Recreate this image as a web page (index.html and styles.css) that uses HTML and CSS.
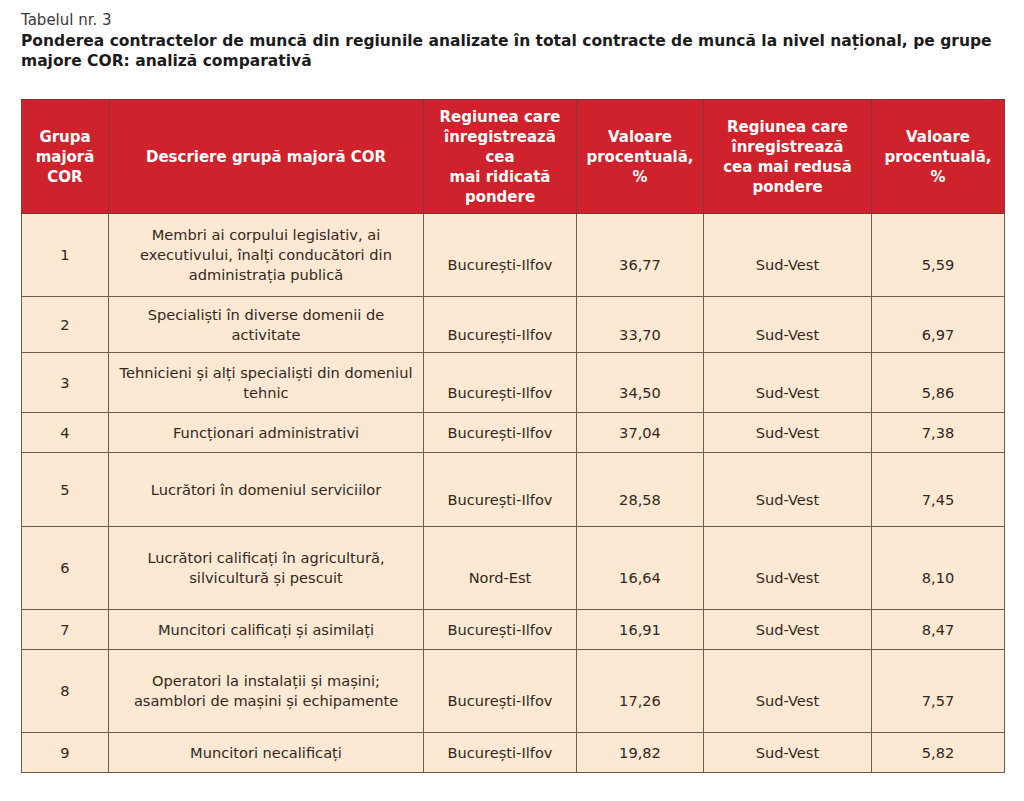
FILE: index.html
```html
<!DOCTYPE html>
<html lang="ro">
<head>
<meta charset="utf-8">
<title>Tabelul nr. 3</title>
<link rel="stylesheet" href="styles.css">
</head>
<body>
<div class="page">
  <p class="label">Tabelul nr. 3</p>
  <h1 class="title">Ponderea contractelor de muncă din regiunile analizate în total contracte de muncă la nivel național, pe grupe majore COR: analiză comparativă</h1>
  <table class="data">
    <colgroup>
      <col class="c1"><col class="c2"><col class="c3"><col class="c4"><col class="c5"><col class="c6">
    </colgroup>
    <thead>
      <tr class="head">
        <th>Grupa<br>majoră<br>COR</th>
        <th>Descriere grupă majoră COR</th>
        <th>Regiunea care<br>înregistrează<br>cea<br>mai ridicată<br>pondere</th>
        <th>Valoare<br>procentuală,<br>%</th>
        <th>Regiunea care<br>înregistrează<br>cea mai redusă<br>pondere</th>
        <th>Valoare<br>procentuală,<br>%</th>
      </tr>
    </thead>
    <tbody>
      <tr class="h83">
        <td>1</td>
        <td>Membri ai corpului legislativ, ai<br>executivului, înalți conducători din<br>administrația publică</td>
        <td class="low">București-Ilfov</td><td class="low">36,77</td><td class="low">Sud-Vest</td><td class="low">5,59</td>
      </tr>
      <tr class="h56">
        <td>2</td>
        <td>Specialiști în diverse domenii de<br>activitate</td>
        <td class="low">București-Ilfov</td><td class="low">33,70</td><td class="low">Sud-Vest</td><td class="low">6,97</td>
      </tr>
      <tr class="h60">
        <td>3</td>
        <td>Tehnicieni și alți specialiști din domeniul<br>tehnic</td>
        <td class="low">București-Ilfov</td><td class="low">34,50</td><td class="low">Sud-Vest</td><td class="low">5,86</td>
      </tr>
      <tr class="h40">
        <td>4</td>
        <td>Funcționari administrativi</td>
        <td>București-Ilfov</td><td>37,04</td><td>Sud-Vest</td><td>7,38</td>
      </tr>
      <tr class="h74">
        <td>5</td>
        <td>Lucrători în domeniul serviciilor</td>
        <td class="low">București-Ilfov</td><td class="low">28,58</td><td class="low">Sud-Vest</td><td class="low">7,45</td>
      </tr>
      <tr class="h83">
        <td>6</td>
        <td>Lucrători calificați în agricultură,<br>silvicultură și pescuit</td>
        <td class="low">Nord-Est</td><td class="low">16,64</td><td class="low">Sud-Vest</td><td class="low">8,10</td>
      </tr>
      <tr class="h40">
        <td>7</td>
        <td>Muncitori calificați și asimilați</td>
        <td>București-Ilfov</td><td>16,91</td><td>Sud-Vest</td><td>8,47</td>
      </tr>
      <tr class="h83">
        <td>8</td>
        <td>Operatori la instalații și mașini;<br>asamblori de mașini și echipamente</td>
        <td class="low">București-Ilfov</td><td class="low">17,26</td><td class="low">Sud-Vest</td><td class="low">7,57</td>
      </tr>
      <tr class="h40">
        <td>9</td>
        <td>Muncitori necalificați</td>
        <td>București-Ilfov</td><td>19,82</td><td>Sud-Vest</td><td>5,82</td>
      </tr>
    </tbody>
  </table>
</div>
</body>
</html>
```
FILE: styles.css
```css
html, body {
  margin: 0;
  padding: 0;
  background: #ffffff;
}

.page {
  padding: 10px 20px 0 21px;
  font-family: "DejaVu Sans", "Liberation Sans", sans-serif;
  color: #2f2219;
}

.label {
  margin: 0;
  font-size: 15px;
  line-height: 20px;
  font-weight: normal;
  color: #3a3a3a;
}

.title {
  margin: 1px 0 0 0;
  font-size: 15.5px;
  line-height: 20px;
  font-weight: bold;
  color: #1c1c1c;
}

.data {
  margin-top: 28px;
  border-collapse: collapse;
  table-layout: fixed;
  width: 983px;
  font-size: 14.6px;
}

.c1 { width: 87px; }
.c2 { width: 315px; }
.c3 { width: 153px; }
.c4 { width: 127px; }
.c5 { width: 168px; }
.c6 { width: 133px; }

.data th,
.data td {
  border: 1px solid #6d5c4c;
  text-align: center;
  vertical-align: middle;
  padding: 0 2px;
  line-height: 20px;
}

.head {
  height: 114px;
}

.data th {
  background: #d0222c;
  color: #ffffff;
  font-weight: bold;
  font-size: 15px;
  border-color: #7a3a36;
}

.data td {
  background: #fce9d3;
  color: #33271d;
}

.data td.low {
  padding-top: 20px;
}

.h83 { height: 83px; }
.h56 { height: 56px; }
.h60 { height: 60px; }
.h40 { height: 40px; }
.h74 { height: 74px; }
```
